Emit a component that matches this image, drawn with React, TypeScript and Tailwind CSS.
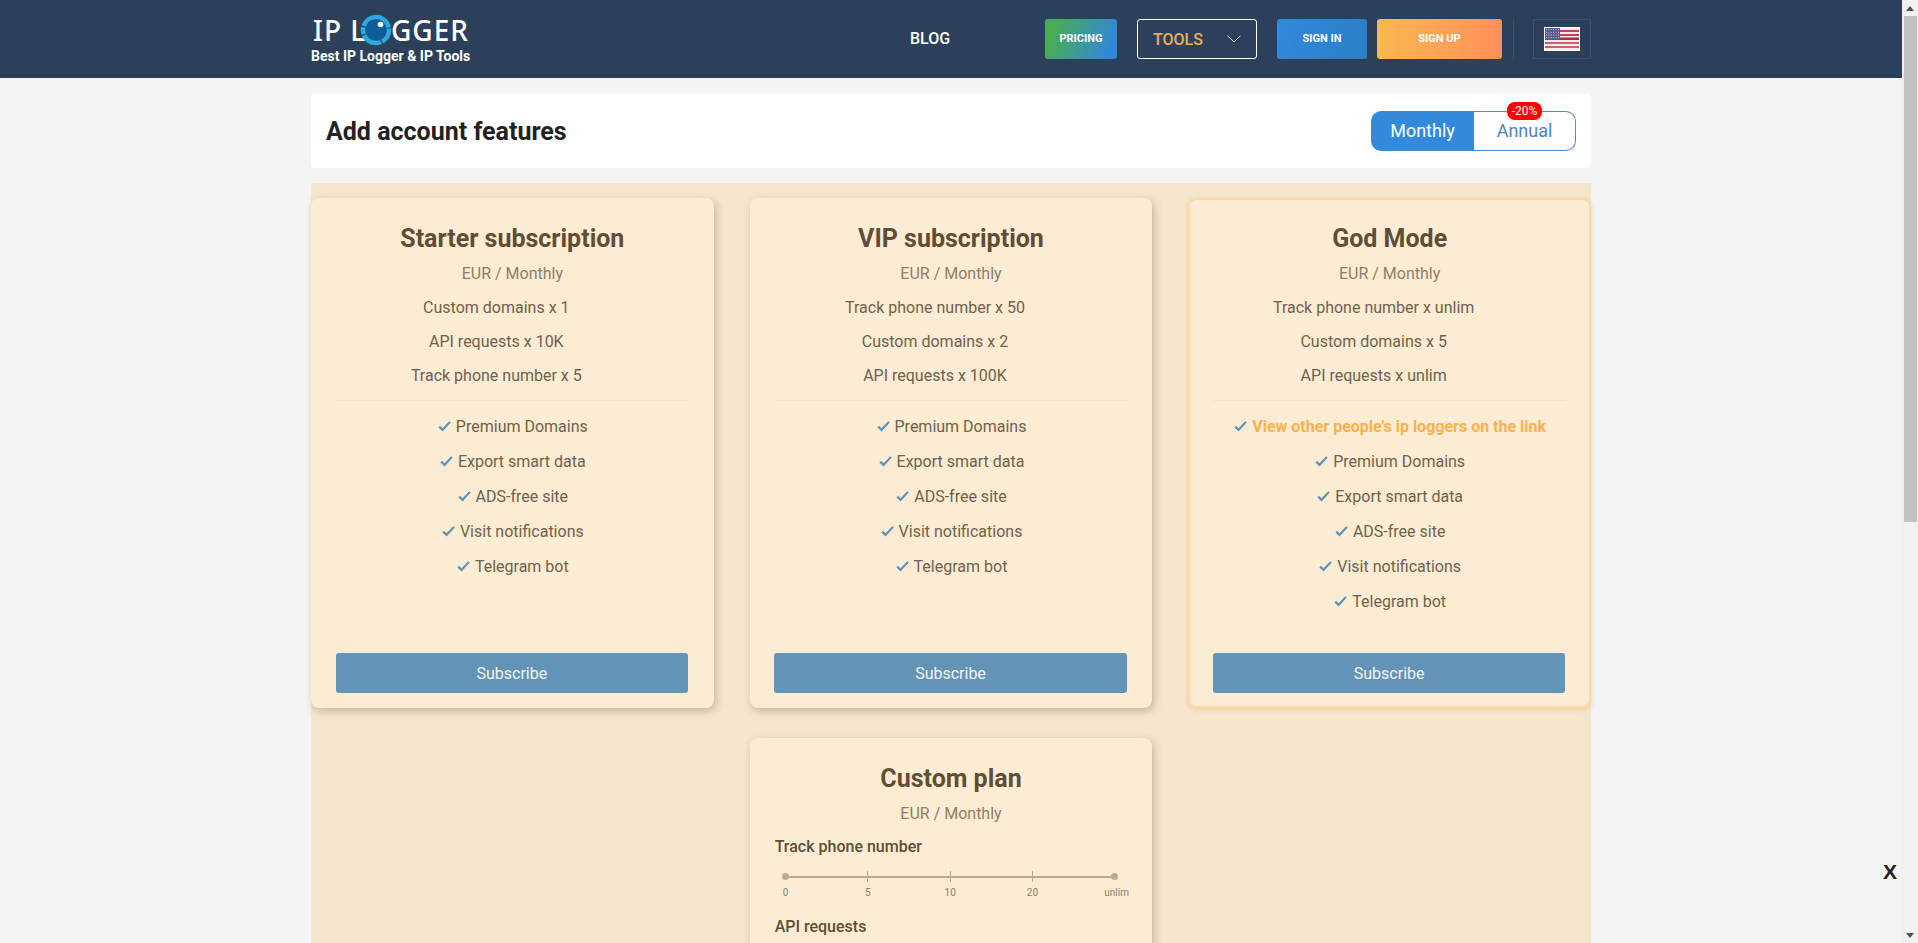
import React from "react";

type Plan = {
  name: string;
  limits: string[];
  extra?: string;
  highlight?: boolean;
};

const plans: Plan[] = [
  { name: "Starter subscription", limits: ["Custom domains x 1", "API requests x 10K", "Track phone number x 5"] },
  { name: "VIP subscription", limits: ["Track phone number x 50", "Custom domains x 2", "API requests x 100K"] },
  {
    name: "God Mode",
    limits: ["Track phone number x unlim", "Custom domains x 5", "API requests x unlim"],
    extra: "View other people's ip loggers on the link",
    highlight: true,
  },
];

const features = ["Premium Domains", "Export smart data", "ADS-free site", "Visit notifications", "Telegram bot"];
const marks = ["0", "5", "10", "20", "unlim"];
const stars = [0, 1, 2, 3, 4, 5, 6, 7, 8, 9, 10, 11, 12, 13, 14, 15, 16, 17, 18, 19, 20, 21, 22, 23];

const Check = () => (
  <svg width="13" height="11" viewBox="0 0 13 11" className="shrink-0 mr-[5px]">
    <path d="M0.4 6.4 L2 4.8 L4.5 7.2 L11.2 0.3 L12.8 1.6 L4.6 10.6 Z" fill="#5f93b8" />
  </svg>
);

const LogoEye = () => (
  <svg width="32" height="32" viewBox="0 0 32 32" className="shrink-0">
    <circle cx="16" cy="16" r="11" fill="#0f5c99" />
    <circle cx="16" cy="16" r="13" fill="none" stroke="#2aa8df" strokeWidth="4.5" strokeDasharray="14 1.2 20 1.2 7 1.2 34 1" />
    <circle cx="20.5" cy="10.5" r="2.8" fill="#ffffff" />
  </svg>
);

const Flag = () => (
  <svg width="36" height="24" viewBox="0 0 36 24">
    <rect width="36" height="24" fill="#ffffff" />
    <rect x="1" y="1" width="34" height="22" fill="#f4e9ea" />
    <rect x="1" y="3" width="34" height="2" fill="#b9475a" />
    <rect x="1" y="7" width="34" height="2" fill="#b9475a" />
    <rect x="1" y="10.5" width="34" height="2.5" fill="#ab2b41" />
    <rect x="1" y="15" width="34" height="2" fill="#c7606f" />
    <rect x="1" y="19" width="34" height="2" fill="#c7606f" />
    <rect x="1" y="1" width="15" height="12" fill="#5a5a8e" />
    {stars.map((s) => (
      <circle key={s} cx={2.5 + (s % 6) * 2.4} cy={2.5 + Math.floor(s / 6) * 2.7} r="0.55" fill="#c8c8dc" />
    ))}
  </svg>
);

const Header = () => (
  <header className="h-[78px] bg-[#2c4159] shrink-0">
    <div className="w-[1280px] mx-auto h-full flex items-center">
      <div className="w-[599px] shrink-0 pt-[1px]">
        <div className="flex items-center h-[32px] pl-[2px] text-white text-[28px] leading-none font-['Noto_Sans',sans-serif] font-medium tracking-[1px]">
          <span className="w-[47px] whitespace-pre">IP L</span>
          <LogoEye />
          <span className="-ml-[1px]">GGER</span>
        </div>
        <div className="mt-[1px] text-white text-[14px] leading-[18px] font-bold">Best IP Logger &amp; IP Tools</div>
      </div>
      <div className="w-[135px] shrink-0 text-white text-[16px] font-medium">BLOG</div>
      <div className="w-[72px] h-[40px] rounded-[3px] bg-[linear-gradient(110deg,#49ae4e_10%,#3187dc_90%)] flex items-center justify-center text-white text-[11px] font-bold">PRICING</div>
      <div className="ml-[20px] w-[120px] h-[40px] rounded-[3px] border border-white flex items-center justify-between pl-[15px] pr-[15px] text-[#e8ad5d] text-[16px] font-medium">
        <span className="pt-[1px]">TOOLS</span>
        <svg width="14" height="8" viewBox="0 0 14 8">
          <path d="M0.5 0.8 L7 6.8 L13.5 0.8" fill="none" stroke="#ffffff" strokeWidth="0.8" />
        </svg>
      </div>
      <div className="ml-[20px] w-[90px] h-[40px] rounded-[3px] bg-[linear-gradient(100deg,#3389dc,#2a7fc7)] flex items-center justify-center text-white text-[11px] font-bold">SIGN IN</div>
      <div className="ml-[10px] w-[125px] h-[40px] rounded-[3px] bg-[linear-gradient(90deg,#fbb84f,#ff8f5a)] flex items-center justify-center text-white text-[11px] font-bold">SIGN UP</div>
      <div className="ml-[11px] w-px h-[40px] bg-[#3e526a]" />
      <div className="ml-[19px] w-[58px] h-[40px] border border-[#3e526a] flex items-center justify-center">
        <Flag />
      </div>
    </div>
  </header>
);

const TitleBar = () => (
  <div className="h-[74px] shrink-0 bg-white rounded-[4px] flex items-center justify-between pl-[15px] pr-[15px]">
    <h1 className="pt-[2px] text-[25px] font-bold text-[#222222]">Add account features</h1>
    <div className="relative flex h-[40px] w-[205px] text-[18px]">
      <div className="w-[103px] pb-[2px] bg-[#338adb] rounded-l-[10px] text-white flex items-center justify-center">Monthly</div>
      <div className="flex-1 pb-[2px] border border-l-0 border-[#4c8cc8] rounded-r-[10px] text-[#4c85c0] flex items-center justify-center">Annual</div>
      <span className="absolute left-[136px] -top-[9px] w-[35px] h-[18px] rounded-[8px] bg-[#ff0000] text-white text-[12px] leading-[18px] text-center">-20%</span>
    </div>
  </div>
);

const PlanCard = ({ plan }: { plan: Plan }) => (
  <div
    className={
      plan.highlight
        ? "flex flex-col rounded-[8px] bg-[#fcecd3] px-[25px] pt-[23px] pb-[15px] shadow-[inset_0_0_0_2px_#fad9a5,0_1px_4px_rgba(230,170,90,0.5)]"
        : "flex flex-col rounded-[8px] bg-[#fcecd3] px-[25px] pt-[23px] pb-[15px] shadow-[2px_3px_8px_rgba(90,70,40,0.3)]"
    }
  >
    <h2 className="text-center text-[25px] leading-[36px] font-bold text-[#5f4d36]">{plan.name}</h2>
    <div className="text-center text-[16px] leading-[34px] text-[#8c7e6c]">EUR / Monthly</div>
    {plan.limits.map((item) => (
      <div key={item} className="text-center pr-[32px] text-[16px] leading-[34px] text-[#70614d]">{item}</div>
    ))}
    <div className="mt-[7px] mb-[8px] h-px bg-[#f5e4cb]" />
    <ul className="pb-[34px]">
      {plan.extra && (
        <li className="flex items-center justify-center pl-[1px] h-[35px] text-[16px] font-bold text-[#f9b150]">
          <Check />
          {plan.extra}
        </li>
      )}
      {features.map((item) => (
        <li key={item} className="flex items-center justify-center pl-[1px] h-[35px] text-[16px] text-[#70614d]">
          <Check />
          {item}
        </li>
      ))}
    </ul>
    <button className="mt-auto -ml-[0.5px] mr-[0.5px] pt-[1px] h-[40px] rounded-[3px] bg-[#6493b8] text-[16px] text-[#f6f3ec]">Subscribe</button>
  </div>
);

const Slider = () => (
  <div className="mt-[9px] ml-[11px] w-[329px]">
    <div className="relative h-[7px] flex justify-between items-center">
      <div className="absolute left-0 right-0 top-[3px] h-[2px] bg-[#bcaa92]" />
      {marks.map((m, i) => (
        <span key={m} className="relative w-0 flex justify-center">
          {i === 0 || i === marks.length - 1 ? (
            <span className="shrink-0 w-[7px] h-[7px] rounded-full bg-[#bcaa92]" />
          ) : (
            <span className="shrink-0 w-px h-[11px] bg-[#bcaa92]" />
          )}
        </span>
      ))}
    </div>
    <div className="flex justify-between mt-[6px]">
      {marks.map((m) => (
        <span key={m} className={m === "unlim" ? "w-0 flex justify-center whitespace-nowrap text-[10px] leading-[14px] text-[#8c7e6c] translate-x-[2px]" : "w-0 flex justify-center whitespace-nowrap text-[10px] leading-[14px] text-[#8c7e6c]"}>{m}</span>
      ))}
    </div>
  </div>
);

const CustomCard = () => (
  <div className="col-start-2 h-[400px] rounded-[8px] bg-[#fcecd3] px-[25px] pt-[23px] shadow-[2px_3px_8px_rgba(90,70,40,0.3)]">
    <h2 className="text-center text-[25px] leading-[36px] font-bold text-[#5f4d36]">Custom plan</h2>
    <div className="text-center text-[16px] leading-[34px] text-[#8c7e6c]">EUR / Monthly</div>
    <div className="-mt-[1px] text-[16px] leading-[34px] font-medium text-[#5f4d36]">Track phone number</div>
    <Slider />
    <div className="mt-[10px] text-[16px] leading-[34px] font-medium text-[#5f4d36]">API requests</div>
  </div>
);

const Scrollbar = () => (
  <aside className="w-[16px] shrink-0 h-full bg-[#f1f1f1] flex flex-col items-center">
    <div className="h-[16px] w-full flex items-center justify-center">
      <span className="border-x-[4px] border-x-transparent border-b-[5px] border-b-[#505050]" />
    </div>
    <div className="w-[13px] ml-[1px] h-[506px] bg-[#c1c1c1]" />
    <div className="mt-auto h-[16px] w-full flex items-center justify-center">
      <span className="border-x-[4px] border-x-transparent border-t-[5px] border-t-[#505050]" />
    </div>
  </aside>
);

export default function App() {
  return (
    <div className="relative h-screen flex overflow-hidden bg-[#f4f4f4] font-['Roboto',sans-serif]">
      <main className="flex-1 min-w-0 flex flex-col h-full overflow-hidden">
        <Header />
        <div className="w-[1280px] mx-auto flex-1 flex flex-col pt-[16px] min-h-0">
          <TitleBar />
          <section className="mt-[15px] flex-1 bg-[#f5e6cd] pt-[15px] grid grid-cols-3 gap-x-[36px] gap-y-[30px] content-start">
            {plans.map((p) => (
              <PlanCard key={p.name} plan={p} />
            ))}
            <CustomCard />
          </section>
        </div>
      </main>
      <Scrollbar />
      <span className="absolute left-[1883px] top-[860px] text-[21px] leading-[24px] font-bold text-[#222222] font-['Liberation_Sans',sans-serif]">X</span>
    </div>
  );
}
